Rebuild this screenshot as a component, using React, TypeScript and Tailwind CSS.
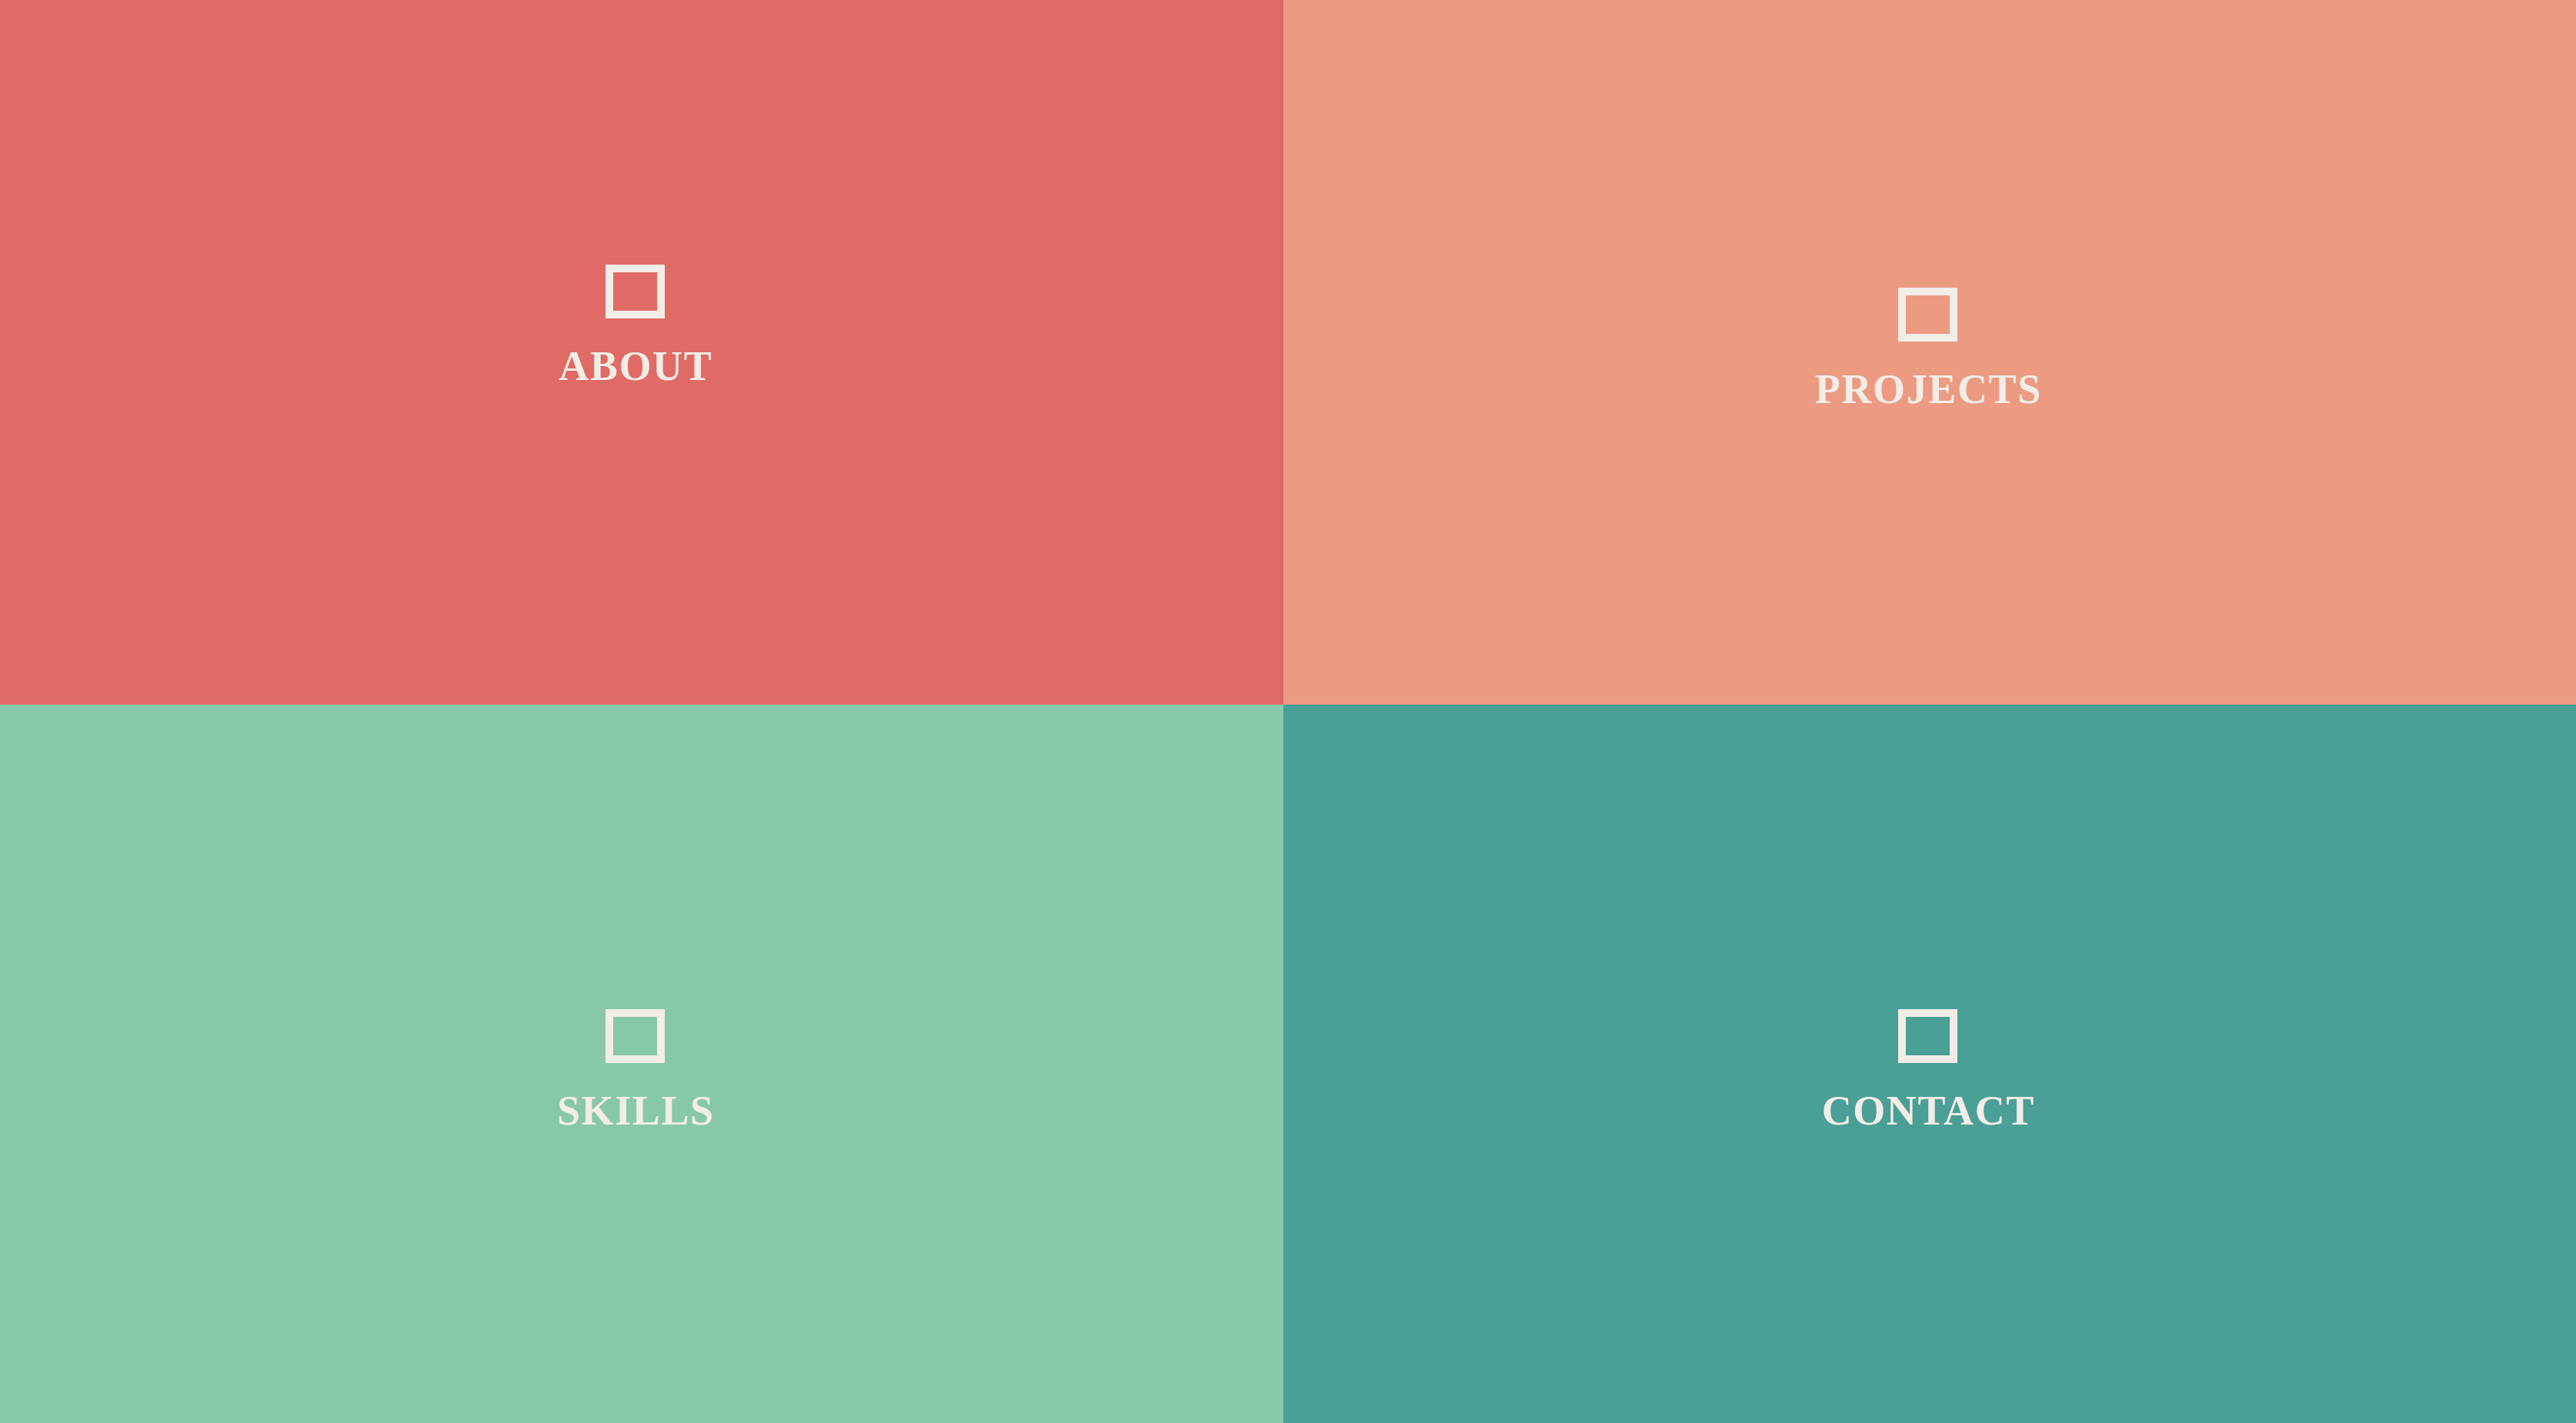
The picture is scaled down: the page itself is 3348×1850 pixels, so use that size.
const tiles = [
  { label: "ABOUT", bg: "bg-[#e06a65]", pad: "pt-[344px] pr-[17px]" },
  { label: "PROJECTS", bg: "bg-[#ec9a82]", pad: "pt-[374px] pr-[5px]" },
  { label: "SKILLS", bg: "bg-[#88c8aa]", pad: "pt-[396px] pr-[17px]" },
  { label: "CONTACT", bg: "bg-[#4a9f96]", pad: "pt-[396px] pr-[5px]" },
];

export default function App() {
  return (
    <main className="grid h-[1850px] w-full grid-cols-[1668px_1fr] grid-rows-[916px_1fr]">
      {tiles.map((t) => (
        <a
          key={t.label}
          href={`#${t.label.toLowerCase()}`}
          className={`flex flex-col items-center ${t.bg} ${t.pad}`}
        >
          {/* square marker */}
          <span className="block h-[70px] w-[77px] border-[10px] border-[#f2ede6]" />
          <span
            className="mt-[35px] pl-[0.03em] text-[54px] font-bold leading-none tracking-[0.03em] text-[#f2ede6]"
            style={{ fontFamily: '"Liberation Serif", "Times New Roman", serif' }}
          >
            {t.label}
          </span>
        </a>
      ))}
    </main>
  );
}
